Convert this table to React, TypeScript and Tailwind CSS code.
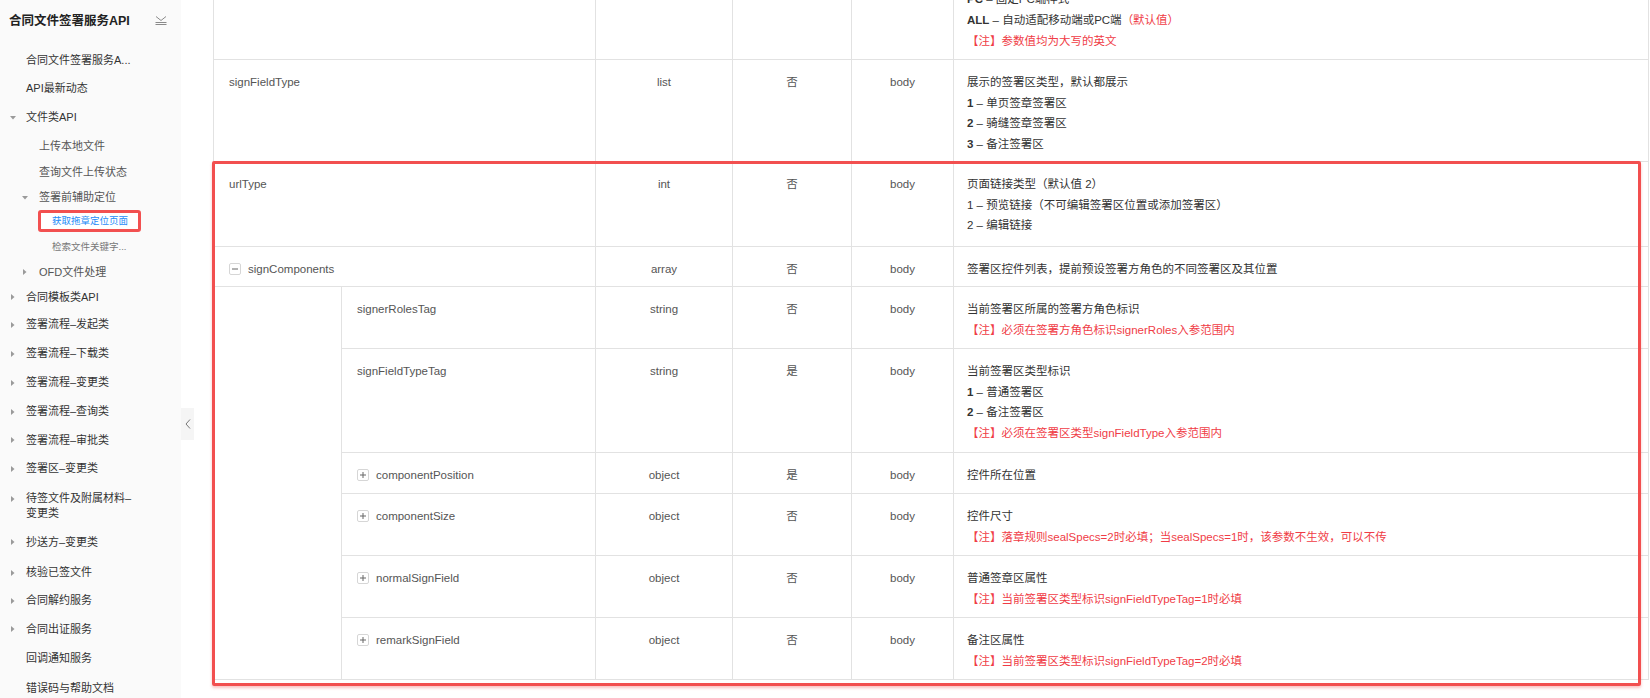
import React from "react";

type NavItem = {
  label: string;
  level: 1 | 2 | 3;
  arrow?: "down" | "right";
  h: string;
  active?: boolean;
  muted?: boolean;
  twoLine?: [string, string];
};

const nav: NavItem[] = [
  { label: "合同文件签署服务A...", level: 1, h: "h-[28px]" },
  { label: "API最新动态", level: 1, h: "h-[29px]" },
  { label: "文件类API", level: 1, arrow: "down", h: "h-[29px]" },
  { label: "上传本地文件", level: 2, h: "h-[28px]" },
  { label: "查询文件上传状态", level: 2, h: "h-[25px]" },
  { label: "签署前辅助定位", level: 2, arrow: "down", h: "h-[25px]" },
  { label: "获取拖章定位页面", level: 3, active: true, h: "h-[24px]" },
  { label: "检索文件关键字...", level: 3, muted: true, h: "h-[26px]" },
  { label: "OFD文件处理", level: 2, arrow: "right", h: "h-[24px]" },
  { label: "合同模板类API", level: 1, arrow: "right", h: "h-[26px]" },
  { label: "签署流程–发起类", level: 1, arrow: "right", h: "h-[29px]" },
  { label: "签署流程–下载类", level: 1, arrow: "right", h: "h-[29px]" },
  { label: "签署流程–变更类", level: 1, arrow: "right", h: "h-[29px]" },
  { label: "签署流程–查询类", level: 1, arrow: "right", h: "h-[29px]" },
  { label: "签署流程–审批类", level: 1, arrow: "right", h: "h-[28px]" },
  { label: "签署区–变更类", level: 1, arrow: "right", h: "h-[29px]" },
  { label: "", level: 1, arrow: "right", h: "h-[42px]", twoLine: ["待签文件及附属材料–", "变更类"] },
  { label: "抄送方–变更类", level: 1, arrow: "right", h: "h-[34px]" },
  { label: "核验已签文件", level: 1, arrow: "right", h: "h-[27px]" },
  { label: "合同解约服务", level: 1, arrow: "right", h: "h-[29px]" },
  { label: "合同出证服务", level: 1, arrow: "right", h: "h-[28px]" },
  { label: "回调通知服务", level: 1, h: "h-[30px]" },
  { label: "错误码与帮助文档", level: 1, h: "h-[30px]" },
];

function Caret({ dir }: { dir?: "down" | "right" }) {
  if (!dir) return null;
  if (dir === "down")
    return (
      <svg width="6" height="4" viewBox="0 0 6 4">
        <polygon points="0,0 6,0 3,3.5" fill="#9a9a9a" />
      </svg>
    );
  return (
    <svg width="4" height="6" viewBox="0 0 4 6">
      <polygon points="0,0 3.5,3 0,6" fill="#9a9a9a" />
    </svg>
  );
}

function NavRow({ item }: { item: NavItem }) {
  if (item.level === 3) {
    if (item.active) {
      return (
        <div className={`flex items-start ${item.h}`}>
          <div className="ml-[38px] flex h-[22px] w-[103px] items-center rounded-[3px] border-[3px] border-[#f25050] bg-white pl-[11px] text-[9.5px] text-[#1d8cf8]">
            {item.label}
          </div>
        </div>
      );
    }
    return (
      <div className={`flex items-center pl-[52px] text-[9.5px] text-[#777] ${item.h}`}>{item.label}</div>
    );
  }
  const isL1 = item.level === 1;
  if (item.twoLine) {
    return (
      <div className={`flex items-start pt-[8px] pl-[8px] ${item.h}`}>
        <span className="flex h-[15px] w-[10px] items-center justify-center">
          <Caret dir={item.arrow} />
        </span>
        <span className="ml-[8px] text-[11px] leading-[15px] text-[#333]">
          {item.twoLine[0]}
          <br />
          {item.twoLine[1]}
        </span>
      </div>
    );
  }
  return (
    <div className={`flex items-center ${isL1 ? "pl-[8px]" : "pl-[20px]"} ${item.h}`}>
      <span className="flex w-[10px] items-center justify-center">
        <Caret dir={item.arrow} />
      </span>
      <span className={`${isL1 ? "ml-[8px] text-[#333]" : "ml-[9px] text-[#555]"} text-[11px] whitespace-nowrap`}>
        {item.label}
      </span>
    </div>
  );
}

type Line = { t: React.ReactNode; red?: boolean };

type RowDef = {
  name: string;
  icon?: "plus" | "minus";
  type: string;
  req: string;
  inn: string;
  h: string;
  pt?: string;
  lines: Line[];
};

const RED = "text-[#f03c46]";

function ToggleBox({ kind }: { kind: "plus" | "minus" }) {
  return (
    <svg width="12" height="12" viewBox="0 0 12 12" className="shrink-0">
      <rect x="0.5" y="0.5" width="11" height="11" rx="1.5" fill="#fff" stroke="#d6d6d6" />
      <line x1="3" y1="6" x2="9" y2="6" stroke="#666" strokeWidth="1" />
      {kind === "plus" && <line x1="6" y1="3" x2="6" y2="9" stroke="#666" strokeWidth="1" />}
    </svg>
  );
}

function B({ children }: { children: React.ReactNode }) {
  return <span className="font-bold text-[#333]">{children}</span>;
}

function TRow({ row, sub }: { row: RowDef; sub?: boolean }) {
  return (
    <div className={`flex border-b border-[#e2e2e2] ${row.h}`}>
      <div className={`${sub ? "w-[254px]" : "w-[382px]"} shrink-0 border-r border-[#e2e2e2] pl-[15px] pt-[12px]`}>
        {row.name && (
          <div className="flex h-[20.7px] items-center text-[#555]">
            {row.icon && <ToggleBox kind={row.icon} />}
            <span className={row.icon ? "ml-[7px]" : ""}>{row.name}</span>
          </div>
        )}
      </div>
      <div className="w-[137px] shrink-0 border-r border-[#e2e2e2] pt-[12px] text-center leading-[20.7px] text-[#555]">
        {row.type}
      </div>
      <div className="w-[119px] shrink-0 border-r border-[#e2e2e2] pt-[12px] text-center leading-[20.7px] text-[#555]">
        {row.req}
      </div>
      <div className="w-[102px] shrink-0 border-r border-[#e2e2e2] pt-[12px] text-center leading-[20.7px] text-[#555]">
        {row.inn}
      </div>
      <div className={`flex-1 pl-[13px] ${row.pt ?? "pt-[12px]"} text-[#333]`}>
        {row.lines.map((l, i) => (
          <div key={i} className={`leading-[20.7px] whitespace-nowrap ${l.red ? RED : ""}`}>
            {l.t}
          </div>
        ))}
      </div>
    </div>
  );
}

const topRows: RowDef[] = [
  {
    name: "",
    type: "",
    req: "",
    inn: "",
    h: "h-[124px]",
    pt: "pt-[53.4px]",
    lines: [
      { t: <><B>PC</B> – 固定PC端样式</> },
      { t: <><B>ALL</B> – 自动适配移动端或PC端<span className={RED}>（默认值）</span></> },
      { t: "【注】参数值均为大写的英文", red: true },
    ],
  },
  {
    name: "signFieldType",
    type: "list",
    req: "否",
    inn: "body",
    h: "h-[102px]",
    lines: [
      { t: "展示的签署区类型，默认都展示" },
      { t: <><B>1</B> – 单页签章签署区</> },
      { t: <><B>2</B> – 骑缝签章签署区</> },
      { t: <><B>3</B> – 备注签署区</> },
    ],
  },
  {
    name: "urlType",
    type: "int",
    req: "否",
    inn: "body",
    h: "h-[85px]",
    lines: [
      { t: "页面链接类型（默认值 2）" },
      { t: "1 – 预览链接（不可编辑签署区位置或添加签署区）" },
      { t: "2 – 编辑链接" },
    ],
  },
  {
    name: "signComponents",
    icon: "minus",
    type: "array",
    req: "否",
    inn: "body",
    h: "h-[40px]",
    lines: [{ t: "签署区控件列表，提前预设签署方角色的不同签署区及其位置" }],
  },
];

const subRows: RowDef[] = [
  {
    name: "signerRolesTag",
    type: "string",
    req: "否",
    inn: "body",
    h: "h-[62px]",
    lines: [
      { t: "当前签署区所属的签署方角色标识" },
      { t: "【注】必须在签署方角色标识signerRoles入参范围内", red: true },
    ],
  },
  {
    name: "signFieldTypeTag",
    type: "string",
    req: "是",
    inn: "body",
    h: "h-[104px]",
    lines: [
      { t: "当前签署区类型标识" },
      { t: <><B>1</B> – 普通签署区</> },
      { t: <><B>2</B> – 备注签署区</> },
      { t: "【注】必须在签署区类型signFieldType入参范围内", red: true },
    ],
  },
  {
    name: "componentPosition",
    icon: "plus",
    type: "object",
    req: "是",
    inn: "body",
    h: "h-[41px]",
    lines: [{ t: "控件所在位置" }],
  },
  {
    name: "componentSize",
    icon: "plus",
    type: "object",
    req: "否",
    inn: "body",
    h: "h-[62px]",
    lines: [
      { t: "控件尺寸" },
      { t: "【注】落章规则sealSpecs=2时必填；当sealSpecs=1时，该参数不生效，可以不传", red: true },
    ],
  },
  {
    name: "normalSignField",
    icon: "plus",
    type: "object",
    req: "否",
    inn: "body",
    h: "h-[62px]",
    lines: [
      { t: "普通签章区属性" },
      { t: "【注】当前签署区类型标识signFieldTypeTag=1时必填", red: true },
    ],
  },
  {
    name: "remarkSignField",
    icon: "plus",
    type: "object",
    req: "否",
    inn: "body",
    h: "h-[62px]",
    lines: [
      { t: "备注区属性" },
      { t: "【注】当前签署区类型标识signFieldTypeTag=2时必填", red: true },
    ],
  },
];

export default function App() {
  return (
    <div className="relative flex h-[698px] w-[1650px] overflow-hidden bg-white font-['Liberation_Sans','Noto_Sans_CJK_SC',sans-serif]">
      {/* Sidebar */}
      <aside className="h-full w-[181px] shrink-0 bg-[#fafafa]">
        <div className="flex h-[42px] items-center justify-between pl-[9px] pr-[14px]">
          <span className="text-[12.5px] font-bold text-[#222]">合同文件签署服务API</span>
          <svg width="12" height="10" viewBox="0 0 12 10">
            <polyline points="1,0.5 6,4.5 11,0.5" fill="none" stroke="#8a8a8a" strokeWidth="1" />
            <line x1="0.5" y1="6.5" x2="11.5" y2="6.5" stroke="#8a8a8a" strokeWidth="1" />
            <line x1="0.5" y1="8.5" x2="11.5" y2="8.5" stroke="#8a8a8a" strokeWidth="1" />
          </svg>
        </div>
        <div className="mt-[4px]">
          {nav.map((n, i) => (
            <NavRow key={i} item={n} />
          ))}
        </div>
      </aside>

      {/* Collapse tab */}
      <div className="absolute left-[181px] top-[408px] flex h-[32px] w-[13px] items-center justify-center bg-[#f5f5f5]">
        <svg width="6" height="10" viewBox="0 0 6 10">
          <polyline points="5,0.5 1,5 5,9.5" fill="none" stroke="#777" strokeWidth="1" />
        </svg>
      </div>

      {/* Main */}
      <main className="relative h-full flex-1 overflow-hidden">
        <div className="mt-[-64px] pl-[32px]">
          <div className="w-[1436px] border-x border-[#e2e2e2] text-[11.5px]">
            {topRows.map((r, i) => (
              <TRow key={i} row={r} />
            ))}
            <div className="flex">
              <div className="w-[128px] shrink-0 border-b border-r border-[#e2e2e2]" />
              <div className="flex-1">
                {subRows.map((r, i) => (
                  <TRow key={i} row={r} sub />
                ))}
              </div>
            </div>
          </div>
        </div>
        {/* annotation box */}
        <div className="pointer-events-none absolute left-[31px] top-[161px] h-[525px] w-[1429px] rounded-[2px] border-[3px] border-[#f24f4f] shadow-[0_2px_3px_rgba(242,79,79,0.35)]" />
      </main>
    </div>
  );
}
